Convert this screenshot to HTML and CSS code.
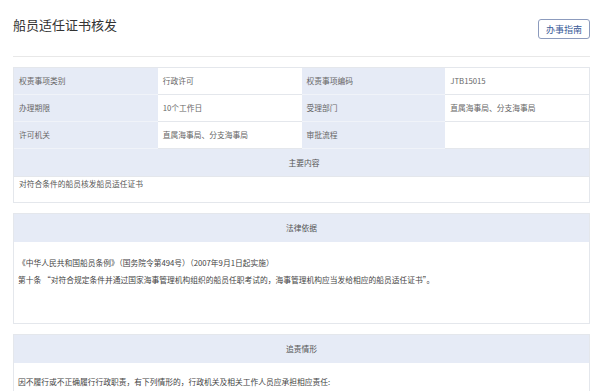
FILE: index.html
```html
<!DOCTYPE html>
<html lang="zh-CN">
<head>
    <meta charset="UTF-8">
    <title>船员适任证书核发</title>
    <link rel="stylesheet" href="styles.css">
</head>
<body>
    <div class="page">
        <div class="page-header">
            <h1 class="title">船员适任证书核发</h1>
            <button class="btn-guide">办事指南</button>
        </div>

        <div class="box">
            <div class="info-grid">
                <div class="cell label">权责事项类别</div>
                <div class="cell">行政许可</div>
                <div class="cell label">权责事项编码</div>
                <div class="cell">JTB15015</div>

                <div class="cell label">办理期限</div>
                <div class="cell">10个工作日</div>
                <div class="cell label">受理部门</div>
                <div class="cell">直属海事局、分支海事局</div>

                <div class="cell label">许可机关</div>
                <div class="cell">直属海事局、分支海事局</div>
                <div class="cell label">审批流程</div>
                <div class="cell"></div>

                <div class="cell head full">主要内容</div>
                <div class="cell text full">对符合条件的船员核发船员适任证书</div>
            </div>
        </div>

        <div class="box">
            <div class="box-head">法律依据</div>
            <div class="box-body law">
                <p>《中华人民共和国船员条例》（国务院令第494号）（2007年9月1日起实施）</p>
                <p>第十条 “对符合规定条件并通过国家海事管理机构组织的船员任职考试的，海事管理机构应当发给相应的船员适任证书”。</p>
            </div>
        </div>

        <div class="box">
            <div class="box-head">追责情形</div>
            <div class="box-body duty">
                <p>因不履行或不正确履行行政职责，有下列情形的，行政机关及相关工作人员应承担相应责任:</p>
            </div>
        </div>
    </div>
</body>
</html>
```

FILE: styles.css
```css
:root {
    --label-bg: #e6ebf6;
    --border-color: #e4e7ec;
    --text-color: #555;
    --title-color: #333;
    --link-color: #3a5a98;
}

* {
    margin: 0;
    padding: 0;
    box-sizing: border-box;
}

body {
    font-family: "Noto Sans CJK SC", "Noto Sans", sans-serif;
    background-color: #ffffff;
    color: var(--text-color);
    font-size: 7.75px;
}

.page {
    padding: 0 11px 0 13px;
}

.page-header {
    display: flex;
    justify-content: space-between;
    align-items: flex-start;
    height: 57px;
    padding-top: 17px;
    border-bottom: 1px solid #e8e8e8;
}

.title {
    font-size: 13px;
    font-weight: 400;
    line-height: 16px;
    color: var(--title-color);
}

.btn-guide {
    margin-top: 2px;
    height: 20px;
    padding: 0 7px;
    font-family: inherit;
    font-size: 9px;
    color: var(--link-color);
    background-color: #fff;
    border: 1px solid #8c9bbd;
    border-radius: 3px;
}

.box {
    margin-top: 10px;
    border: 1px solid var(--border-color);
}

.info-grid {
    display: grid;
    grid-template-columns: repeat(4, 1fr);
}

.cell {
    height: 27px;
    line-height: 26px;
    padding-left: 5px;
    border-bottom: 1px solid var(--border-color);
    color: #666;
}

.cell.label {
    background-color: var(--label-bg);
    border-bottom-color: #f0f3f9;
}

.cell.full {
    grid-column: 1 / -1;
}

.cell.head {
    background-color: var(--label-bg);
    text-align: center;
    color: #555;
    height: 28px;
    line-height: 28px;
}

.cell.text {
    height: 25px;
    line-height: 14px;
    border-bottom: none;
    color: #555;
}

.box-head {
    height: 28px;
    line-height: 28px;
    text-align: center;
    background-color: var(--label-bg);
    color: #555;
}

.box-body {
    padding-left: 4px;
    color: #444;
}

.box-body p {
    line-height: 17px;
}

.law {
    padding-top: 12px;
    padding-bottom: 35px;
}

.duty {
    padding-top: 10px;
    padding-bottom: 10px;
}
```
